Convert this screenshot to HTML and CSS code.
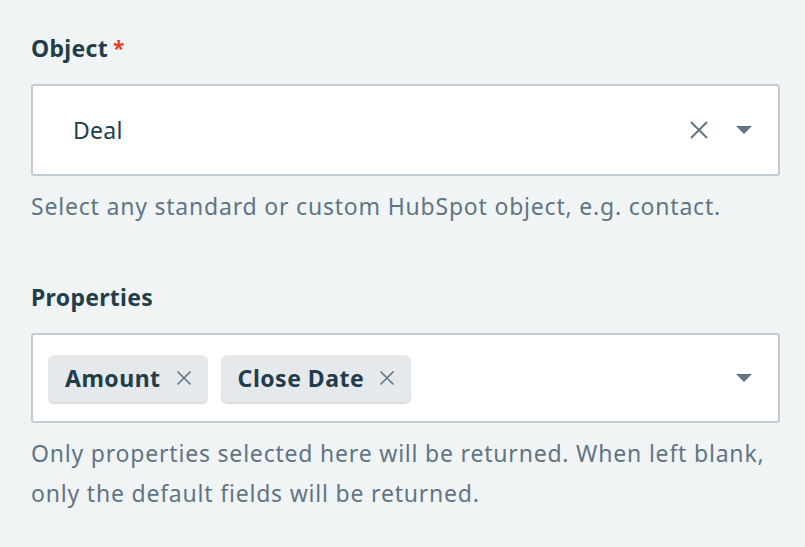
FILE: index.html
```html
<!DOCTYPE html>
<html lang="en">
<head>
	<meta charset="UTF-8">
	<link rel="stylesheet" href="styles.css">
	<title>Fields</title>
</head>
<body>
	<div class="field">
		<label class="label">Object<span class="req">*</span></label>
		<div class="select">
			<span class="value">Deal</span>
			<span class="clear">
				<svg width="20" height="20" viewBox="0 0 20 20"><path d="M2 2 L18 18 M18 2 L2 18" stroke="#5f7585" stroke-width="2" fill="none"/></svg>
			</span>
			<span class="caret"></span>
		</div>
		<p class="hint">Select any standard or custom HubSpot object, e.g. contact.</p>
	</div>
	<div class="field">
		<label class="label">Properties</label>
		<div class="select multi">
			<div class="chips">
				<span class="chip">Amount
					<svg width="16" height="16" viewBox="0 0 16 16"><path d="M1.5 1.5 L14.5 14.5 M14.5 1.5 L1.5 14.5" stroke="#5f7585" stroke-width="1.6" fill="none"/></svg>
				</span>
				<span class="chip">Close Date
					<svg width="16" height="16" viewBox="0 0 16 16"><path d="M1.5 1.5 L14.5 14.5 M14.5 1.5 L1.5 14.5" stroke="#5f7585" stroke-width="1.6" fill="none"/></svg>
				</span>
			</div>
			<span class="caret"></span>
		</div>
		<p class="hint">Only properties selected here will be returned. When left blank, only the default fields will be returned.</p>
	</div>
</body>
</html>
```
FILE: styles.css
```css
*{
	padding: 0;
	margin: 0;
	box-sizing: border-box;
	font-family: "Noto Sans", Lato, sans-serif;
	letter-spacing: 0.3px;
}
body{
	background-color: #f1f4f5;
	padding: 30px 25px 0 31px;
	display: flex;
	flex-direction: column;
	gap: 53px;
}
.field{
	display: flex;
	flex-direction: column;
}
.label{
	font-size: 23px;
	font-weight: 700;
	color: #213d4b;
	line-height: 36px;
	margin-bottom: 18px;
}
.req{
	color: #e0401f;
	margin-left: 5px;
	font-size: 21px;
	vertical-align: top;
}
.select{
	height: 92px;
	background-color: #fff;
	border: 2px solid #c2ccd3;
	border-radius: 3px;
	display: flex;
	align-items: center;
	padding: 0 26px 0 40px;
}
.select.multi{
	height: 90px;
	padding-left: 15px;
}
.value{
	flex: 1;
	font-size: 23px;
	color: #213d4b;
}
.clear{
	display: flex;
	margin-right: 27px;
}
.caret{
	width: 0;
	height: 0;
	border-left: 8px solid transparent;
	border-right: 8px solid transparent;
	border-top: 8px solid #5f7585;
}
.chips{
	flex: 1;
	display: flex;
	gap: 13px;
}
.chip{
	display: flex;
	align-items: center;
	gap: 15px;
	height: 47px;
	padding: 0 16px 0 17px;
	background-color: #e5e9ec;
	border-radius: 6px;
	box-shadow: 0 2px 0 #d8dde1;
	font-size: 23px;
	font-weight: 700;
	color: #213d4b;
	letter-spacing: 0.5px;
}
.hint{
	font-size: 23px;
	color: #5f7585;
	line-height: 40px;
	margin-top: 10px;
	letter-spacing: 0.8px;
}
```
